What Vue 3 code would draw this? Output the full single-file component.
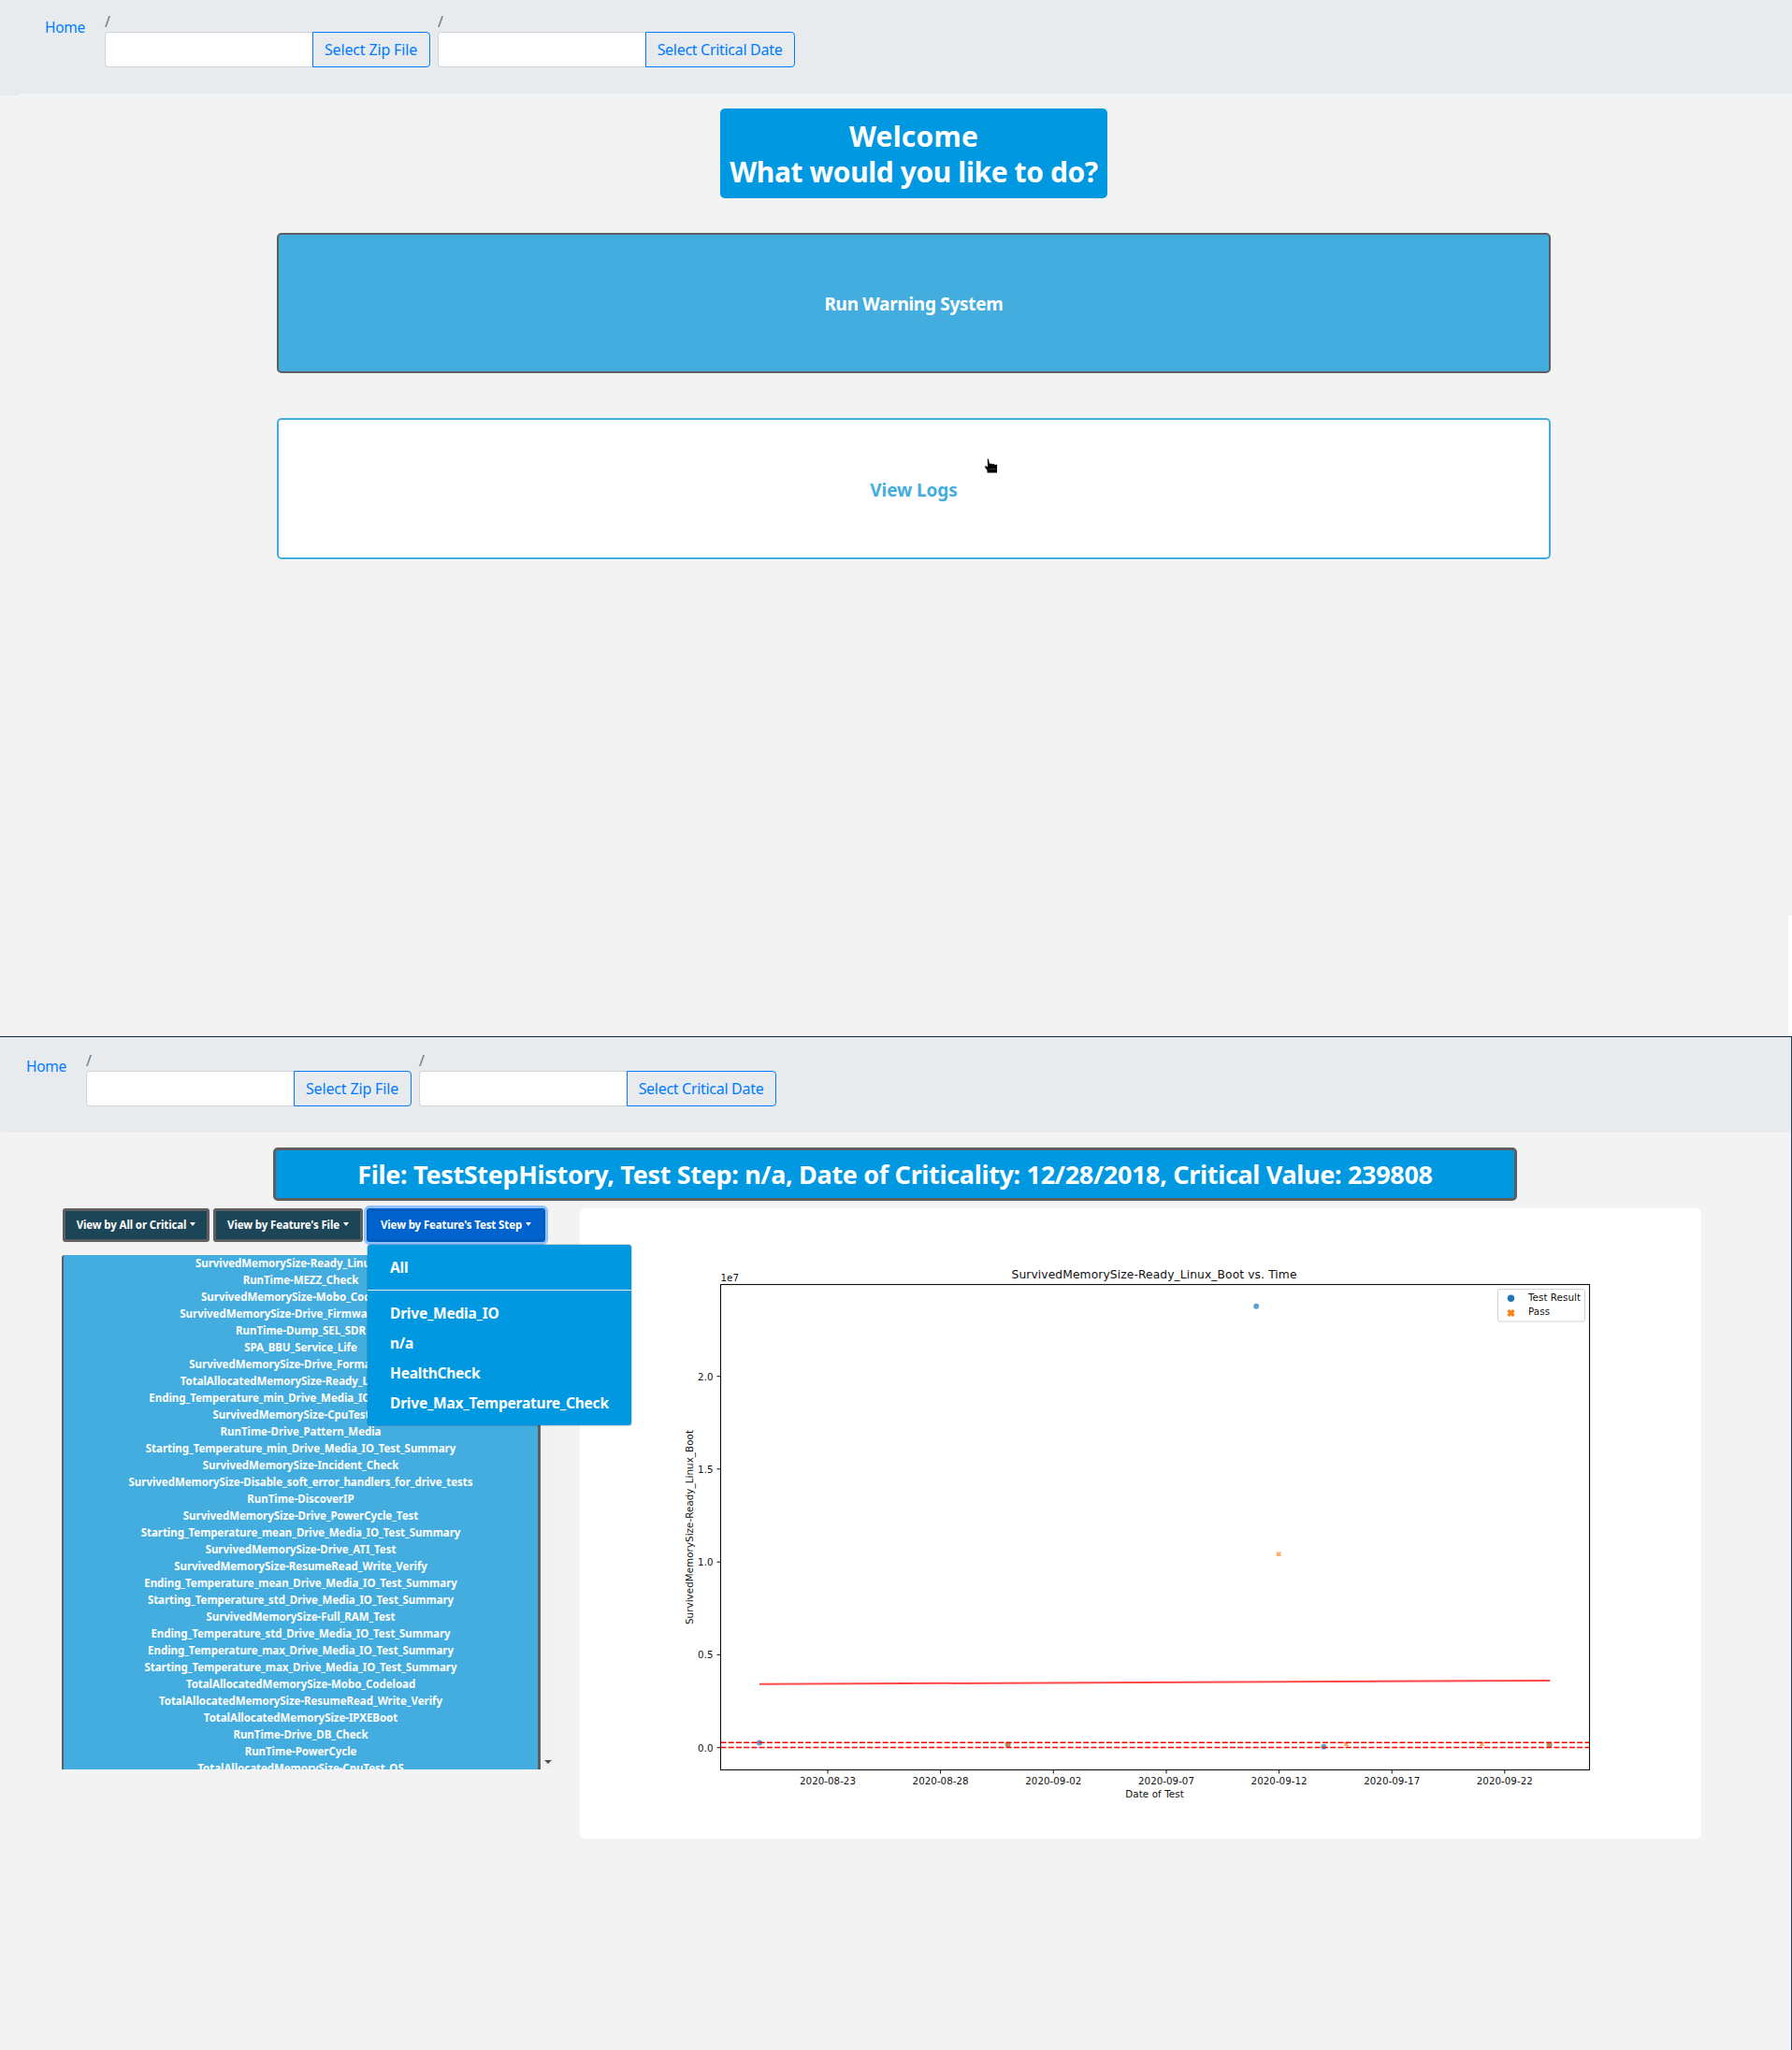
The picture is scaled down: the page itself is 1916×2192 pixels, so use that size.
<script setup>
const viewButtons = [
  { label: 'View by All or Critical', cls: 'b1' },
  { label: "View by Feature's File", cls: 'b2' },
]
const steps = ['Drive_Media_IO', 'n/a', 'HealthCheck', 'Drive_Max_Temperature_Check']
const features = [
  'SurvivedMemorySize-Ready_Linux_Boot',
  'RunTime-MEZZ_Check',
  'SurvivedMemorySize-Mobo_Codeload',
  'SurvivedMemorySize-Drive_Firmware_Update',
  'RunTime-Dump_SEL_SDR',
  'SPA_BBU_Service_Life',
  'SurvivedMemorySize-Drive_Format_Check',
  'TotalAllocatedMemorySize-Ready_Linux_Boot',
  'Ending_Temperature_min_Drive_Media_IO_Test_Summary',
  'SurvivedMemorySize-CpuTest_OS',
  'RunTime-Drive_Pattern_Media',
  'Starting_Temperature_min_Drive_Media_IO_Test_Summary',
  'SurvivedMemorySize-Incident_Check',
  'SurvivedMemorySize-Disable_soft_error_handlers_for_drive_tests',
  'RunTime-DiscoverIP',
  'SurvivedMemorySize-Drive_PowerCycle_Test',
  'Starting_Temperature_mean_Drive_Media_IO_Test_Summary',
  'SurvivedMemorySize-Drive_ATI_Test',
  'SurvivedMemorySize-ResumeRead_Write_Verify',
  'Ending_Temperature_mean_Drive_Media_IO_Test_Summary',
  'Starting_Temperature_std_Drive_Media_IO_Test_Summary',
  'SurvivedMemorySize-Full_RAM_Test',
  'Ending_Temperature_std_Drive_Media_IO_Test_Summary',
  'Ending_Temperature_max_Drive_Media_IO_Test_Summary',
  'Starting_Temperature_max_Drive_Media_IO_Test_Summary',
  'TotalAllocatedMemorySize-Mobo_Codeload',
  'TotalAllocatedMemorySize-ResumeRead_Write_Verify',
  'TotalAllocatedMemorySize-IPXEBoot',
  'RunTime-Drive_DB_Check',
  'RunTime-PowerCycle',
  'TotalAllocatedMemorySize-CpuTest_OS',
]
// Chart coordinates are relative to the card's top-left corner.
const yTicks = [
  ['2.0', 179.7], ['1.5', 278.8], ['1.0', 378.2], ['0.5', 477.4], ['0.0', 576.7],
]
const xTicks = [
  ['2020-08-23', 265], ['2020-08-28', 385.6], ['2020-09-02', 506.3], ['2020-09-07', 627],
  ['2020-09-12', 747.6], ['2020-09-17', 868.2], ['2020-09-22', 988.8],
]
const dots = [[192, 571.6], [457.6, 573.6], [723.2, 104.7], [795.3, 575.8], [1036.6, 573.8]]
const crosses = [[457.6, 573.4], [747.2, 369.8], [819.4, 573], [964.2, 573], [1036.6, 573.8]]
</script>

<template>
  <main class="page">
    <section class="screen home">
      <nav class="crumbs">
        <a class="home-link">Home</a>
        <div class="crumb">
          <span class="slash">/</span>
          <div class="group"><input class="field" /><button class="pick zip">Select Zip File</button></div>
        </div>
        <div class="crumb">
          <span class="slash">/</span>
          <div class="group"><input class="field" /><button class="pick date">Select Critical Date</button></div>
        </div>
      </nav>
      <div class="stub"></div>
      <h1 class="welcome">Welcome<br /><span class="ask">What would you like to do?</span></h1>
      <button class="big run">Run Warning System</button>
      <button class="big logs">View Logs</button>
      <svg class="cursor" width="18" height="20" viewBox="0 0 18 20">
        <path d="M4.200 2q1.300-1.400 2.300.2l.9 4.300 1.300-.4 1.300.8 1.500-.4 1.200.9 1.700-.2 1.200 1.400v8.400H4V13.500L1.900 11.500 1.800 9l1.600-.2 1.100 1z" fill="#000" stroke="#fff" stroke-width="1" stroke-linejoin="round" />
        <path d="M6.500 12.500h1m1 0h1m1 0h1m1 0h1" stroke="#777" stroke-width=".8" />
      </svg>
      <div class="strip"></div>
    </section>

    <section class="screen results">
      <nav class="crumbs second">
        <a class="home-link">Home</a>
        <div class="crumb">
          <span class="slash">/</span>
          <div class="group"><input class="field" /><button class="pick zip">Select Zip File</button></div>
        </div>
        <div class="crumb">
          <span class="slash">/</span>
          <div class="group"><input class="field" /><button class="pick date">Select Critical Date</button></div>
        </div>
      </nav>
      <h2 class="summary">File: TestStepHistory, Test Step: n/a, Date of Criticality: 12/28/2018, Critical Value: 239808</h2>

      <div class="columns">
        <div class="left">
          <div class="filters">
            <button v-for="b in viewButtons" :key="b.label" class="filter" :class="b.cls">{{ b.label }}<i class="caret"></i></button>
            <div class="drop">
              <button class="filter b3">View by Feature's Test Step<i class="caret"></i></button>
              <div class="menu">
                <a class="item">All</a>
                <div class="divider"></div>
                <a v-for="s in steps" :key="s" class="item">{{ s }}</a>
              </div>
            </div>
          </div>
          <div class="scroller">
            <div class="list">
              <div v-for="f in features" :key="f" class="row">{{ f }}</div>
            </div>
            <div class="bar"><i class="down"></i></div>
          </div>
        </div>

        <div class="card">
          <svg class="chart" width="1199" height="674" viewBox="0 0 1199 674">
            <circle v-for="(d, i) in dots" :key="'d' + i" :cx="d[0]" :cy="d[1]" r="3" fill="#1f77b4" fill-opacity=".7" />
            <path v-for="(c, i) in crosses" :key="'c' + i" :transform="`translate(${c[0]} ${c[1]})`" d="M-1.300-2.700 0-1.400 1.300-2.700 2.700-1.300 1.400 0 2.700 1.300 1.300 2.700 0 1.400-1.300 2.700-2.700 1.300-1.400 0-2.700-1.300z" fill="#ff7f0e" fill-opacity=".7" />
            <path d="M192 508.800 1037.300 505" stroke="#f00" stroke-opacity=".72" stroke-width="2" />
            <path d="M150.500 571.300H1079.500M150.500 576.500H1079.500" stroke="#f00" stroke-width="1.500" stroke-dasharray="5.900 2.350" />
            <rect x="150.500" y="81.500" width="929" height="519" fill="none" stroke="#111" stroke-width="1.100" />
            <g class="tick">
              <g v-for="t in yTicks" :key="t[0]">
                <path :d="`M146.500 ${t[1]}h4`" stroke="#111" />
                <text x="142.500" :y="t[1] + 4" text-anchor="end">{{ t[0] }}</text>
              </g>
              <g v-for="t in xTicks" :key="t[0]">
                <path :d="`M${t[1]} 600.500v4`" stroke="#111" />
                <text :x="t[1]" y="615.500" text-anchor="middle" textLength="60">{{ t[0] }}</text>
              </g>
              <text x="150.500" y="77.500">1e7</text>
              <text x="614.500" y="629.700" text-anchor="middle" textLength="62.500">Date of Test</text>
              <text transform="translate(120.500 341) rotate(-90)" text-anchor="middle" textLength="208">SurvivedMemorySize-Ready_Linux_Boot</text>
            </g>
            <text class="title" x="614" y="74.500" text-anchor="middle" textLength="305">SurvivedMemorySize-Ready_Linux_Boot vs. Time</text>
            <rect x="981.500" y="86.500" width="93" height="34.500" rx="2" fill="#fff" stroke="#d3d3d3" />
            <circle cx="995.500" cy="96.300" r="3.700" fill="#1f77b4" />
            <path transform="translate(995.500 112)" d="M-1.900-3.800 0-2.200 1.900-3.800 3.800-1.900 2.200 0 3.800 1.900 1.900 3.800 0 2.200-1.900 3.800-3.800 1.900-2.200 0-3.800-1.900z" fill="#ff7f0e" stroke="#ff7f0e" stroke-width=".5" />
            <g class="tick">
              <text x="1014" y="99" textLength="56">Test Result</text>
              <text x="1014" y="114" textLength="23">Pass</text>
            </g>
          </svg>
        </div>
      </div>
    </section>
  </main>
</template>

<style>
body {
  background: #f3f3f3;
}
</style>

<style scoped>
.page,
.page * {
  box-sizing: border-box;
}
.page {
  width: 1916px;
  height: 2192px;
  overflow: hidden;
  background: #f3f3f3;
  font-family: "Noto Sans", sans-serif;
  font-size: 16px;
  line-height: 24px;
}
button,
input {
  font-family: inherit;
  margin: 0;
}
.screen {
  position: relative;
  display: flex;
  flex-direction: column;
}
.home {
  height: 1108px;
}
.results {
  height: 1084px;
  border-top: 1px solid #0f2747;
  border-right: 1px solid #1c4558;
}
.crumbs {
  display: flex;
  align-items: flex-start;
  flex: none;
  height: 100px;
  padding: 10px 0 0 48px;
  background: #e7ebee;
  border-top-left-radius: 4px;
}
.crumbs.second {
  height: 102px;
  padding-top: 12px;
  padding-left: 28px;
  border-radius: 0 0 4px 4px;
}
.home-link {
  width: 64px;
  margin-top: 7px;
  color: #007bff;
  font-size: 15.500px;
  letter-spacing: -0.25px;
}
.crumb {
  display: flex;
  flex-direction: column;
  margin-right: 8px;
}
.slash {
  height: 24px;
  padding-top: 1px;
  color: #6c757d;
}
.group {
  display: flex;
}
.field {
  width: 223px;
  height: 38px;
  background: #fff;
  border: 1px solid #ced4da;
  border-right: 0;
  border-radius: 4px 0 0 4px;
}
.pick {
  height: 38px;
  margin-left: -1px;
  padding: 0 1px 0 0;
  color: #007bff;
  font-size: 16px;
  background: #e7ebee;
  border: 1px solid #007bff;
  border-radius: 0 4px 4px 0;
}
.zip {
  width: 126px;
  letter-spacing: -0.15px;
}
.date {
  width: 160px;
  letter-spacing: -0.3px;
}
.stub {
  flex: none;
  width: 20px;
  height: 2px;
  background: #e7ebee;
  border-radius: 0 0 0 4px;
}
.welcome {
  align-self: center;
  width: 414px;
  height: 96px;
  margin: 14px 0 0 38px;
  padding: 11px 0 0;
  color: #fff;
  font-size: 30px;
  font-weight: 700;
  line-height: 38px;
  letter-spacing: 0.2px;
  text-align: center;
  white-space: nowrap;
  background: #0099e1;
  border-radius: 5px;
}
.ask {
  letter-spacing: -0.4px;
}
.big {
  align-self: center;
  width: 1362px;
  height: 150px;
  margin: 37px 0 0 38px;
  padding: 2px 0 0;
  font-size: 19px;
  font-weight: 700;
  border-radius: 5px;
}
.run {
  color: #fff;
  letter-spacing: -0.28px;
  background: #44ade0;
  border: 2px solid #5e5e5e;
}
.logs {
  height: 151px;
  margin-top: 48px;
  padding-top: 3px;
  color: #44ade0;
  letter-spacing: -0.1px;
  background: #fff;
  border: 2px solid #44ade0;
}
.cursor {
  position: absolute;
  left: 1051px;
  top: 489px;
}
.strip {
  align-self: flex-end;
  width: 4px;
  height: 129px;
  margin-top: auto;
  background: #fff;
}
.summary {
  width: 1330px;
  height: 57px;
  margin: 16px 0 0 292px;
  color: #fff;
  font-size: 27px;
  font-weight: 700;
  line-height: 52px;
  letter-spacing: -0.33px;
  text-align: center;
  white-space: nowrap;
  background: #0099e1;
  border: 3px solid #5e5e5e;
  border-radius: 5px;
}
.columns {
  display: flex;
  margin-top: 8px;
}
.left {
  flex: none;
  width: 620px;
  padding-left: 66px;
}
.filters {
  display: flex;
  height: 36px;
  padding-left: 1px;
  gap: 4px;
}
.filter {
  display: flex;
  align-items: center;
  justify-content: center;
  height: 36px;
  padding: 0 0 1px;
  color: #fff;
  font-size: 11.500px;
  font-weight: 700;
  letter-spacing: -0.13px;
  white-space: nowrap;
  background: #1c4558;
  border: 3px solid #5e5e5e;
  border-radius: 3px;
}
.b1 {
  width: 157px;
}
.b2 {
  width: 160px;
}
.b3 {
  width: 191px;
  background: #0062cc;
  border-color: #005cbf;
  box-shadow: 0 0 0 3px #8fc2fa;
}
.caret {
  margin: -2px 0 0 4px;
  border: 4px solid transparent;
  border-width: 4px 3.500px 0;
  border-top-color: currentColor;
}
.drop {
  position: relative;
}
.menu {
  position: absolute;
  z-index: 2;
  top: 38px;
  left: 0;
  width: 284px;
  height: 195px;
  padding: 8px 0;
  color: #fff;
  font-size: 15.500px;
  font-weight: 700;
  letter-spacing: -0.22px;
  background: #0099e1;
  background-clip: padding-box;
  border: 1px solid rgba(0, 0, 0, 0.15);
  border-radius: 4px;
}
.item {
  display: block;
  height: 32px;
  padding: 4px 24px;
}
.divider {
  height: 1px;
  margin: 8px 0;
  background: #e9ecef;
}
.scroller {
  display: flex;
  width: 527px;
  height: 550px;
  margin-top: 14px;
  overflow: hidden;
}
.list {
  width: 512px;
  height: 560px;
  color: #fff;
  font-size: 11.500px;
  font-weight: 700;
  line-height: 18px;
  letter-spacing: -0.04px;
  text-align: center;
  background: #44ade0;
  border: solid #5e5e5e;
  border-width: 0 3px 0 2px;
  border-top-left-radius: 3px;
}
.row {
  height: 18px;
  white-space: nowrap;
}
.bar {
  display: flex;
  flex: 1;
  align-items: flex-end;
  justify-content: center;
  padding-bottom: 6px;
  background: #f1f1f1;
}
.down {
  border: 4px solid transparent;
  border-top-color: #505050;
  border-bottom: 0;
}
.card {
  width: 1199px;
  height: 674px;
  background: #fff;
  border-radius: 5px;
}
.chart {
  display: block;
}
.chart text {
  font-family: "DejaVu Sans", sans-serif;
  font-size: 12.300px;
  fill: #111;
}
.chart .tick text {
  font-size: 10.300px;
}
</style>
